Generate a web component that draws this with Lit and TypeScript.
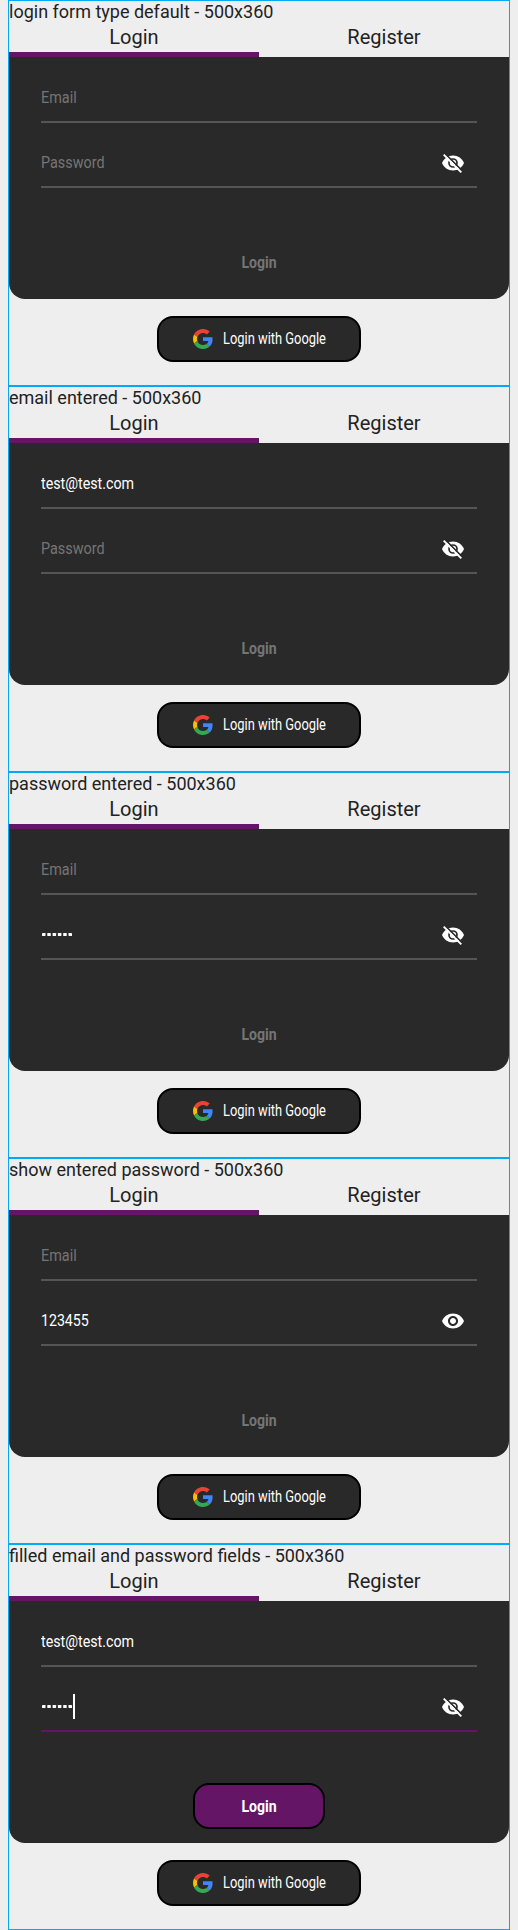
import { LitElement, html, css, svg, nothing } from "lit";
import { customElement, property } from "lit/decorators.js";

const eye = svg`<path d="M12 4.5C7 4.5 2.73 7.61 1 12c1.73 4.39 6 7.5 11 7.5s9.27-3.11 11-7.5c-1.73-4.39-6-7.5-11-7.5zM12 17c-2.76 0-5-2.24-5-5s2.24-5 5-5 5 2.24 5 5-2.24 5-5 5zm0-8c-1.66 0-3 1.34-3 3s1.34 3 3 3 3-1.34 3-3-1.34-3-3-3z"/>`;
const eyeOff = svg`
  <path d="M12 4.5C7 4.5 2.73 7.61 1 12c1.73 4.39 6 7.5 11 7.5s9.27-3.11 11-7.5c-1.73-4.39-6-7.5-11-7.5z"/>
  <circle cx="12" cy="12" r="4" fill="none" stroke="#292929" stroke-width="1.7"/>
  <path d="M4.3 2.9 21.3 19.9" fill="none" stroke="#292929" stroke-width="1.6"/>
  <path d="M2.7 3.7 20.3 21.3" fill="none" stroke="#fff" stroke-width="1.9"/>`;

@customElement("login-form")
export class LoginForm extends LitElement {
  @property() email = "";
  @property() password = "";
  @property({ type: Boolean }) visible = false;
  @property({ type: Boolean }) editing = false;

  static styles = css`
    :host { display: block; height: 360px; color: #222; }
    .tabs { display: grid; grid-template-columns: 1fr 1fr; height: 32px; }
    .tab { font-size: 20px; line-height: 23px; padding-top: 1px; text-align: center; box-sizing: border-box; }
    .tab.active { border-bottom: 5px solid #651565; }
    .card { box-sizing: border-box; height: 242px; padding: 17px 32px 14px; background: #292929; border-radius: 0 0 16px 16px; display: flex; flex-direction: column; }
    .field { box-sizing: border-box; height: 49px; margin-bottom: 16px; border-bottom: 2px solid #555; display: flex; align-items: center; justify-content: space-between; font-size: 16px; line-height: 20px; color: #fff; }
    .field.focus { border-color: #651565; }
    .value { display: flex; align-items: center; }
    .text { display: inline-block; white-space: nowrap; transform-origin: left center; }
    .hint { color: #757575; }
    .email-hint { transform: scaleX(0.9); }
    .pass-hint { transform: scaleX(0.9); }
    .mail { transform: scaleX(0.89); }
    .digits { transform: scaleX(0.885); }
    .dots { width: 31px; height: 3px; padding-left: 1px; fill: #fff; overflow: visible; }
    .caret { width: 2px; height: 25px; background: #fff; }
    .eye { width: 24px; height: 24px; margin-right: 12px; fill: #fff; }
    .button { box-sizing: border-box; height: 46px; display: flex; align-items: center; justify-content: center; border: 2px solid transparent; border-radius: 16px; font: inherit; font-size: 16px; line-height: 20px; padding: 0; }
    .submit { width: 132px; margin: auto auto 0; padding-top: 1px; font-weight: 700; color: #757575; background: transparent; }
    .submit-label { transform: scaleX(0.88); transform-origin: center; }
    .submit.ready { color: #fff; background: #651565; border-color: #000; }
    .google { width: 204px; margin: 17px auto 0; gap: 10px; color: #fff; background: #292929; border-color: #000; }
    .google-label { width: 102px; transform: scaleX(0.805); text-align: left; }
    .logo { width: 20px; height: 20px; }
  `;

  render() {
    const ready = this.email && this.password;
    return html`
      <div class="tabs"><div class="tab active">Login</div><div class="tab">Register</div></div>
      <div class="card">
        <div class="field">
          ${this.email ? html`<span class="text mail">${this.email}</span>` : html`<span class="text hint email-hint">Email</span>`}
        </div>
        <div class="field ${this.editing ? "focus" : ""}">
          <span class="value">
            ${!this.password
              ? html`<span class="text hint pass-hint">Password</span>`
              : this.visible
                ? html`<span class="text digits">${this.password}</span>`
                : html`<svg class="dots">${[...this.password].map((_, i) => svg`<rect x=${i * 5.3} y="0" width="3.5" height="3" rx="0.4"/>`)}</svg>`}
            ${this.editing ? html`<i class="caret"></i>` : nothing}
          </span>
          <svg class="eye" viewBox="0 0 24 24">${this.visible ? eye : eyeOff}</svg>
        </div>
        <button class="button submit ${ready ? "ready" : ""}"><span class="text submit-label">Login</span></button>
      </div>
      <button class="button google">
        <svg class="logo" viewBox="0 0 48 48">
          <path fill="#EA4335" d="M24 9.5c3.54 0 6.71 1.22 9.21 3.6l6.85-6.85C35.9 2.38 30.47 0 24 0 14.62 0 6.51 5.38 2.56 13.22l7.98 6.19C12.43 13.72 17.74 9.5 24 9.5z"/>
          <path fill="#4285F4" d="M46.98 24.55c0-1.57-.15-3.09-.38-4.55H24v9.02h12.94c-.58 2.96-2.26 5.48-4.78 7.18l7.73 6c4.51-4.18 7.09-10.36 7.09-17.65z"/>
          <path fill="#FBBC05" d="M10.53 28.59c-.48-1.45-.76-2.99-.76-4.59s.27-3.14.76-4.59l-7.98-6.19C.92 16.46 0 20.12 0 24c0 3.88.92 7.54 2.56 10.78l7.97-6.19z"/>
          <path fill="#34A853" d="M24 48c6.48 0 11.93-2.13 15.89-5.81l-7.73-6c-2.15 1.45-4.92 2.3-8.16 2.3-6.26 0-11.57-4.22-13.47-9.91l-7.98 6.19C6.51 42.62 14.62 48 24 48z"/>
        </svg>
        <span class="text google-label">Login with Google</span>
      </button>
    `;
  }
}

@customElement("app-root")
export class AppRoot extends LitElement {
  static styles = css`
    :host { display: block; box-sizing: border-box; height: 1930px; padding: 0 8px; background: #eee; font-family: Roboto, sans-serif; color: #222; }
    .panel { box-sizing: border-box; height: 386px; border: 1px solid #03a9f4; }
    .caption { height: 24px; font-size: 18px; line-height: 21px; white-space: nowrap; }
  `;

  render() {
    return html`
      <div class="panel"><div class="caption">login form type default - 500x360</div><login-form></login-form></div>
      <div class="panel"><div class="caption">email entered - 500x360</div><login-form email="test@test.com"></login-form></div>
      <div class="panel"><div class="caption">password entered - 500x360</div><login-form password="123455"></login-form></div>
      <div class="panel"><div class="caption">show entered password - 500x360</div><login-form password="123455" visible></login-form></div>
      <div class="panel"><div class="caption">filled email and password fields - 500x360</div><login-form email="test@test.com" password="123455" editing></login-form></div>
    `;
  }
}
